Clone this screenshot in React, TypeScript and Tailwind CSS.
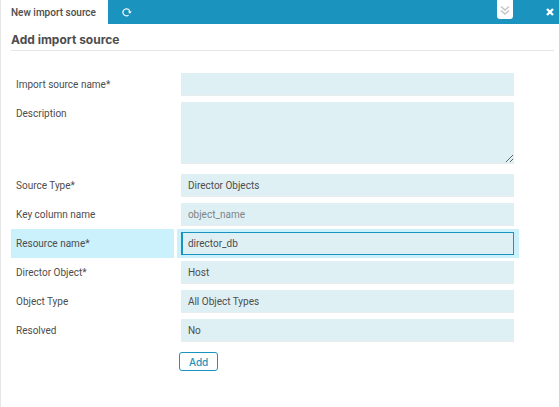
import { useState } from "react";
import type { ReactNode } from "react";

interface FormRowProps {
  id: string;
  label: string;
  active?: boolean;
  onFocus: (id: string) => void;
  children: ReactNode;
}

const fieldClass =
  "block w-full appearance-none rounded-none border-b border-[#e8ecec] bg-[#dff0f4] px-[7px] text-[#4d4d4d] outline-none placeholder:text-[#7d8485]";
const inputClass = `${fieldClass} h-[23px]`;
const activeClass =
  "block h-[23px] w-full appearance-none rounded-none border border-l-2 border-[#1a94be] bg-[#dff0f4] px-[5px] text-[#4d4d4d] outline-none";

const FormRow = ({ id, label, active, onFocus, children }: FormRowProps) => (
  <div className="flex gap-[3px]" onFocus={() => onFocus(id)}>
    <label htmlFor={id} className={`w-[30%] px-[5px] pt-[7px] leading-4 ${active ? "bg-[#cbf1fd]" : ""}`}>
      {label}
    </label>
    <div className={`w-[63%] py-[3px] pr-[5px] pl-1 ${active ? "bg-[#cbf1fd]" : ""}`}>{children}</div>
  </div>
);

const selects = [
  { id: "object_class", label: "Director Object*", options: ["Host", "Service", "User"] },
  { id: "object_type", label: "Object Type", options: ["All Object Types", "Objects", "Templates"] },
  { id: "resolved", label: "Resolved", options: ["No", "Yes"] },
];

const App = () => {
  const [active, setActive] = useState("resource");

  return (
    <div className="min-h-screen border-l border-[#e6e6e6] bg-white font-['Roboto','Liberation_Sans',sans-serif] text-[10px] text-[#4d4d4d]">
      <nav className="flex h-6 items-center bg-[#1a94be]">
        <a href="#new" className="flex h-full items-center bg-white pr-3 pl-[10px] font-medium">
          New import source
        </a>
        <button type="button" aria-label="Refresh" className="ml-[14px] text-white">
          <svg viewBox="0 0 10 10" className="h-[10px] w-[10px]" fill="none" stroke="currentColor" strokeWidth="1.2">
            <path d="M6.6 8.1A3.5 3.5 0 1 1 7.9 4.8" />
            <path d="M5.8 4.4h4L7.9 6.8z" fill="currentColor" stroke="none" />
          </svg>
        </button>
        <button
          type="button"
          aria-label="Show controls"
          className="mr-[33px] ml-auto flex h-[19px] w-4 items-center justify-center self-start rounded-b-[3px] bg-white text-[#c4c4c4]"
        >
          <svg viewBox="0 0 10 10" className="h-[10px] w-[10px]" fill="none" stroke="currentColor" strokeWidth="1.4">
            <path d="M1 1.4l4 3.6 4-3.6M1 5.4L5 9l4-3.6" />
          </svg>
        </button>
        <button type="button" aria-label="Close" className="mr-[5px] text-white">
          <svg viewBox="0 0 8 8" className="h-2 w-2" fill="none" stroke="currentColor" strokeWidth="2.4">
            <path d="M1 1l6 6M7 1L1 7" />
          </svg>
        </button>
      </nav>

      <main className="pr-[5px] pl-[10px]">
        <h1 className="border-b border-[#e6e6e6] pt-[6px] font-['Inter',sans-serif] text-[12px] leading-5 font-bold">
          Add import source
        </h1>

        <form className="pt-[19px]" onSubmit={(e) => e.preventDefault()}>
          <FormRow id="source_name" label="Import source name*" active={active === "source_name"} onFocus={setActive}>
            <input id="source_name" type="text" className={inputClass} />
          </FormRow>
          <FormRow id="description" label="Description" active={active === "description"} onFocus={setActive}>
            <textarea id="description" className={`${fieldClass} mb-1 h-[62px] resize-y`} />
          </FormRow>
          <FormRow id="source_type" label="Source Type*" active={active === "source_type"} onFocus={setActive}>
            <select id="source_type" className={inputClass}>
              <option>Director Objects</option>
            </select>
          </FormRow>
          <FormRow id="key_column" label="Key column name" active={active === "key_column"} onFocus={setActive}>
            <input id="key_column" type="text" placeholder="object_name" className={inputClass} />
          </FormRow>
          <FormRow id="resource" label="Resource name*" active={active === "resource"} onFocus={setActive}>
            <select id="resource" className={active === "resource" ? activeClass : inputClass}>
              <option>director_db</option>
            </select>
          </FormRow>
          {selects.map((s) => (
            <FormRow key={s.id} id={s.id} label={s.label} active={active === s.id} onFocus={setActive}>
              <select id={s.id} className={inputClass}>
                {s.options.map((o) => (
                  <option key={o}>{o}</option>
                ))}
              </select>
            </FormRow>
          ))}

          <div className="flex gap-[3px] pt-[7px]">
            <div className="w-[30%]" />
            <button
              type="submit"
              className="ml-[2px] h-[19px] rounded-[3px] border border-[#1a94be] px-[9px] font-['Inter',sans-serif] leading-4 font-medium text-[#1a94be]"
            >
              Add
            </button>
          </div>
        </form>
      </main>
    </div>
  );
};

export default App;
